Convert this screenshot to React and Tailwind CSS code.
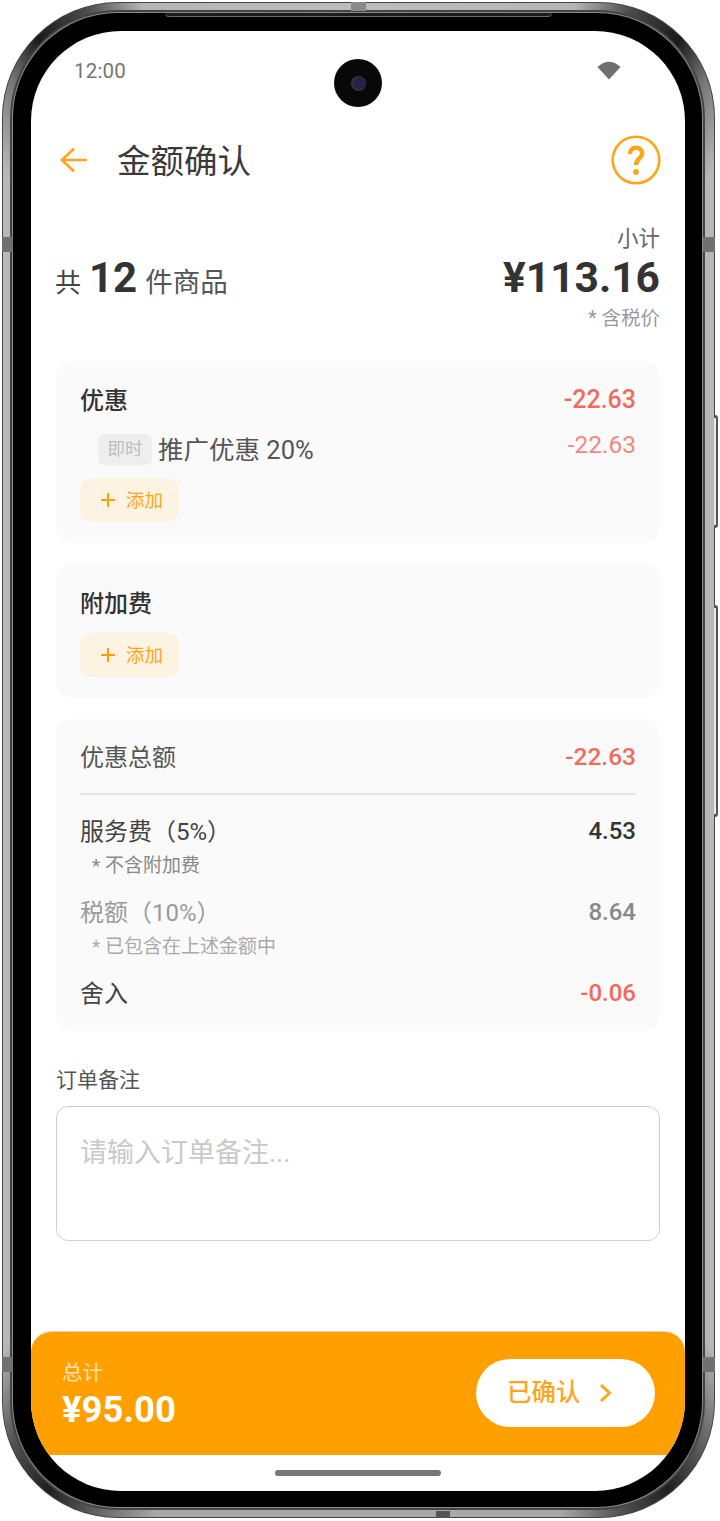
const CJK = "font-['Roboto','Noto_Sans_CJK_SC',sans-serif]";

function AddButton({ className = "" }) {
  return (
    <div className={`flex h-[44px] w-[99px] items-center rounded-[12px] bg-[#fdf3e3] pl-[20px] ${className}`}>
      <svg width="16" height="16" viewBox="0 0 16 16" className="shrink-0">
        <path d="M8 1V15M1 8H15" stroke="#ffa000" strokeWidth="2" fill="none" />
      </svg>
      <span className="ml-[10px] translate-y-[1px] text-[18.5px] leading-[24px] text-[#ffa51a]">添加</span>
    </div>
  );
}

function Row({ label, value, labelClass, valueClass, className = "" }) {
  return (
    <div className={`flex items-center justify-between ${className}`}>
      <span className={`text-[24px] leading-[32px] ${labelClass}`}>{label}</span>
      <span className={`-translate-y-[1px] leading-[32px] ${valueClass}`}>{value}</span>
    </div>
  );
}

function Screen() {
  return (
    <div className={`flex h-full w-full flex-col overflow-hidden rounded-[90px] bg-white ${CJK}`}>
      {/* status bar */}
      <div className="relative flex h-[80px] shrink-0 items-start justify-between pl-[43px] pr-[64px] pt-[26px]">
        <span className="text-[20.5px] leading-[28px] tracking-[0.2px] text-[#757575]">12:00</span>
        <svg width="24" height="20" viewBox="0 0 24 20" className="mt-[3px]">
          <path d="M0.5 7Q12 -3.5 23.5 7L12 19.5Z" fill="#707070" />
        </svg>
        <div className="absolute left-[303px] top-[28px] flex h-[48px] w-[48px] items-center justify-center rounded-full bg-[#080808]">
          <div className="h-[15px] w-[15px] rounded-full bg-[radial-gradient(circle_at_55%_50%,#2a1f6a_0%,#23233a_45%,#3a3a44_70%,#111_100%)]" />
        </div>
      </div>

      {/* title bar */}
      <div className="flex h-[98px] shrink-0 items-center pl-[29px] pr-[24px]">
        <svg width="28" height="26" viewBox="0 0 28 26" className="shrink-0">
          <path d="M27 13H3M14 1.5L2 13L14 24.5" stroke="#ffa51a" strokeWidth="2.6" fill="none" />
        </svg>
        <span className="ml-[29px] translate-y-[2px] text-[33.5px] leading-[44px] text-[#3a3a3a]">金额确认</span>
        <svg width="50" height="50" viewBox="0 0 50 50" className="ml-auto shrink-0">
          <circle cx="25" cy="25" r="23.3" stroke="#ffa51a" strokeWidth="2.6" fill="none" />
          <path d="M18.8 19C18.8 14.8 21.5 12.8 25 12.8C28.8 12.8 31.3 15.2 31.3 18.5C31.3 23 25 23.5 25 30" stroke="#ffa51a" strokeWidth="4.4" fill="none" />
          <circle cx="25" cy="37" r="2.9" fill="#ffa51a" />
        </svg>
      </div>

      {/* item count and subtotal */}
      <div className="flex shrink-0 items-center justify-between px-[25px]">
        <div className="-ml-[1px] flex items-baseline pt-[19px]">
          <span className="text-[26px] leading-[40px] text-[#444]">共</span>
          <span className="ml-[8px] text-[42px] font-bold leading-[40px] text-[#333]">12</span>
          <span className="ml-[8px] text-[27.5px] leading-[40px] text-[#555]">件商品</span>
        </div>
        <div className="flex flex-col items-end">
          <span className="mt-[16px] text-[21.5px] leading-[28px] text-[#666]">小计</span>
          <span className="text-[42.5px] font-bold leading-[50px] text-[#333]">¥113.16</span>
          <span className="mt-[3px] text-[19.5px] leading-[26px] text-[#999]">* 含税价</span>
        </div>
      </div>

      <div className="mt-[29px] flex shrink-0 flex-col gap-[21px] px-[25px]">
        {/* discounts */}
        <div className="rounded-[16px] bg-[#fafafa] pb-[21px] pl-[24px] pr-[24px] pt-[24px]">
          <Row label="优惠" value="-22.63" labelClass="font-medium text-[#333]" valueClass="text-[25px] font-medium text-[#f26a5e]" />
          <div className="mt-[16px] flex h-[31px] items-start justify-between">
            <div className="flex items-center">
              <span className="ml-[18px] flex h-[31px] w-[54px] items-center justify-center rounded-[6px] bg-[#eeeeee] text-[17.5px] text-[#bdbdbd]">即时</span>
              <span className="ml-[6px] translate-y-[1px] text-[25.5px] leading-[32px] text-[#555]">推广优惠 20%</span>
            </div>
            <span className="-mt-[4px] text-[24.5px] leading-[32px] text-[#f5877f]">-22.63</span>
          </div>
          <AddButton className="mt-[14px]" />
        </div>

        {/* surcharges */}
        <div className="rounded-[16px] bg-[#fafafa] pb-[21px] pl-[24px] pr-[24px] pt-[24px]">
          <span className="block text-[24px] font-medium leading-[32px] text-[#333]">附加费</span>
          <AddButton className="mt-[13px]" />
        </div>

        {/* totals breakdown */}
        <div className="rounded-[16px] bg-[#fafafa] pb-[21px] pl-[24px] pr-[24px] pt-[23px]">
          <Row label="优惠总额" value="-22.63" labelClass="text-[#555]" valueClass="text-[24.5px] font-medium text-[#f26a5e]" />
          <div className="mt-[19px] h-[2px] bg-[#e6e6e6]" />
          <Row className="mt-[21px]" label="服务费（5%）" value="4.53" labelClass="text-[#444]" valueClass="text-[24px] font-medium text-[#333]" />
          <div className="mt-[6px] pl-[12px] text-[19px] leading-[24px] text-[#888]">* 不含附加费</div>
          <Row className="mt-[19px]" label="税额（10%）" value="8.64" labelClass="text-[#9a9a9a]" valueClass="text-[24px] font-medium text-[#888]" />
          <div className="mt-[6px] pl-[12px] text-[19px] leading-[24px] text-[#aaa]">* 已包含在上述金额中</div>
          <Row className="mt-[19px]" label="舍入" value="-0.06" labelClass="text-[#444]" valueClass="text-[24px] font-medium text-[#f26a5e]" />
        </div>
      </div>

      {/* order note */}
      <div className="mt-[35px] shrink-0 px-[25px]">
        <div className="text-[21px] leading-[28px] text-[#555]">订单备注</div>
        <div className="mt-[12px] h-[135px] rounded-[12px] border-[1.5px] border-[#cfcfcf] pl-[23px] pt-[28px] text-[27px] leading-[36px] text-[#c9c9c9]">
          请输入订单备注...
        </div>
      </div>

      <div className="flex-1" />

      {/* total bar */}
      <div className="flex h-[124px] shrink-0 items-center justify-between rounded-t-[21px] border-t-[1.5px] border-[#e6d3ad] bg-[#ffa000] pl-[31px] pr-[30px]">
        <div className="flex flex-col text-white">
          <span className="translate-y-[2px] text-[20.5px] leading-[28px] text-[#ffe3b3]">总计</span>
          <span className="mt-[4px] text-[36.5px] font-bold leading-[42px]">¥95.00</span>
        </div>
        <div className="flex h-[68px] w-[179px] -translate-y-[1px] items-center rounded-full bg-white pl-[31px]">
          <span className="text-[24.5px] font-medium leading-[32px] text-[#ffa51a]">已确认</span>
          <svg width="14" height="20" viewBox="0 0 14 20" className="ml-[18px]">
            <path d="M2 2L10.5 10L2 18" stroke="#ffa51a" strokeWidth="3" fill="none" />
          </svg>
        </div>
      </div>

      {/* home indicator */}
      <div className="flex h-[36px] shrink-0 items-start justify-center pt-[15px]">
        <div className="h-[6px] w-[166px] rounded-full bg-[#777]" />
      </div>
    </div>
  );
}

export default function App() {
  return (
    <div className="h-[1521px] w-[720px] overflow-hidden bg-white pl-[2px] pt-[2px]">
      <div className="relative h-[1516px] w-[713px]">
        {/* side buttons */}
        <div className="absolute right-[-3px] top-[413px] h-[113px] w-[4px] rounded-r-[3px] border-y-[3px] border-r-[2px] border-[#555] bg-[#e8e8e8]" />
        <div className="absolute right-[-3px] top-[603px] h-[212px] w-[4px] rounded-r-[3px] border-y-[3px] border-r-[2px] border-[#555] bg-[#e8e8e8]" />

        {/* metal body */}
        <div className="h-full w-full rounded-[116px] bg-[#444] p-[1px]">
          <div className="h-full w-full rounded-[115px] bg-[conic-gradient(#bdbdbd_0deg,#b5b5b5_16deg,#4a4a4a_20deg,#1a1a1a_24deg,#777_27deg,#b8b8b8_31deg,#b8b8b8_149deg,#666_153deg,#1f1f1f_157deg,#555_161deg,#a8a8a8_165deg,#a8a8a8_195deg,#666_199deg,#1f1f1f_203deg,#555_207deg,#b8b8b8_211deg,#b8b8b8_329deg,#777_333deg,#1a1a1a_336deg,#4a4a4a_340deg,#b5b5b5_344deg,#bdbdbd_360deg)] pb-[7px] pl-[7px] pr-[9px] pt-[7px]">
            <div className="h-full w-full rounded-[108px] bg-[#444] p-[2px]">
              <div className="h-full w-full rounded-[106px] bg-[#8a8a8a] p-[1px]">
                <div className="h-full w-full rounded-[105px] bg-black pb-[16px] pl-[18px] pr-[17px] pt-[18px]">
                  <Screen />
                </div>
              </div>
            </div>
          </div>
        </div>

        {/* raised section of the bezel along the top edge */}
        <div className="absolute left-[163px] top-[11px] h-[4px] w-[387px] rounded-b-[4px] border-b border-[#6a6a6a] bg-[#1c1c1c]" />

        {/* antenna bands */}
        <div className="absolute left-0 top-[235px] h-[15px] w-[11px] bg-[#707070]" />
        <div className="absolute right-0 top-[235px] h-[15px] w-[12px] bg-[#707070]" />
        <div className="absolute left-0 top-[1355px] h-[15px] w-[11px] bg-[#707070]" />
        <div className="absolute right-0 top-[1355px] h-[15px] w-[12px] bg-[#707070]" />
        <div className="absolute left-[349px] top-0 h-[9px] w-[15px] bg-[#8a8a8a]" />
        <div className="absolute bottom-0 left-[434px] h-[7px] w-[14px] bg-[#555]" />
      </div>
    </div>
  );
}
